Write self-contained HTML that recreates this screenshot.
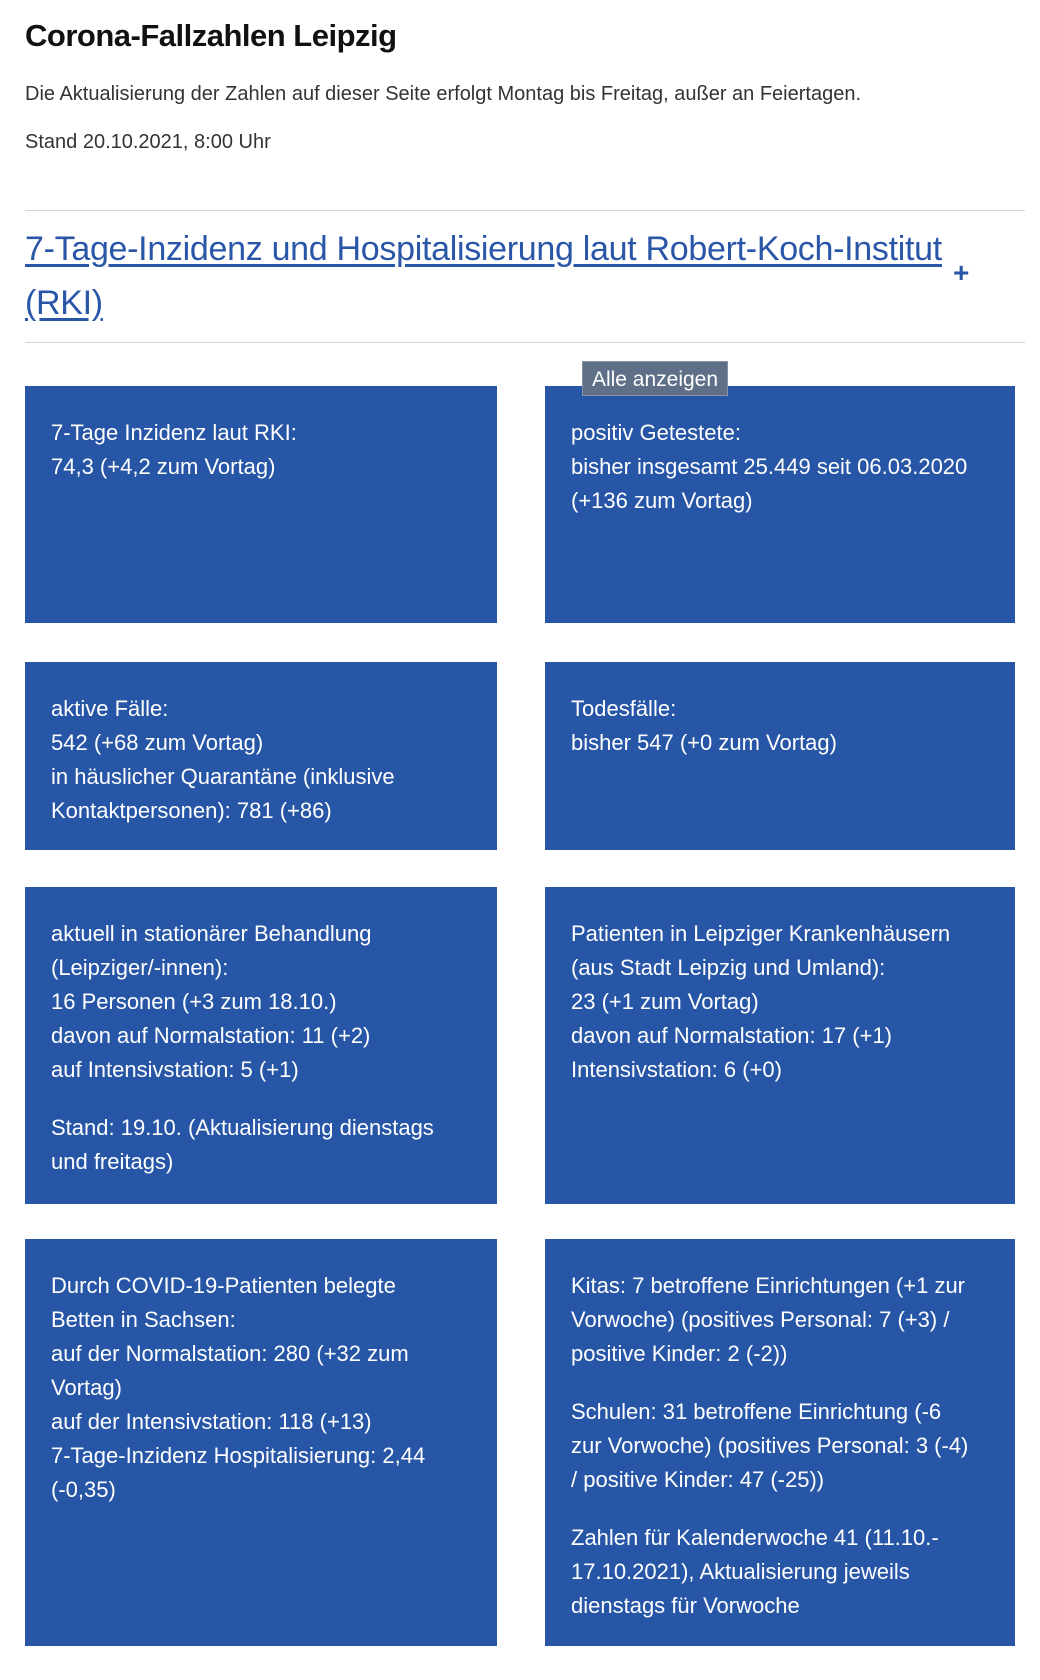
<!DOCTYPE html>
<html><head><meta charset="utf-8"><style>
body{margin:0;background:#fff;font-family:"Liberation Sans",sans-serif;color:#222;width:1040px;height:1680px;position:relative;overflow:hidden}
h1{position:absolute;left:25px;top:18px;margin:0;font-size:31px;font-weight:bold;color:#111;letter-spacing:-0.5px}
.p{position:absolute;left:25px;font-size:20px;color:#333}
.hr{position:absolute;left:25px;width:1000px;height:1px;background:#d4d4d4}
.h2{position:absolute;left:25px;top:222px;width:960px;font-size:34px;line-height:54px;color:#2a56a8;text-decoration:underline;text-underline-offset:4px;letter-spacing:-0.3px;white-space:nowrap}
.plus{position:absolute;left:953px;top:257px;font-size:28px;color:#2a56a8;font-weight:bold}
.b{position:absolute;background:#2756a7;color:#fff;font-size:22px;line-height:34px;padding:30px 10px 0 26px;box-sizing:border-box;white-space:nowrap;overflow:hidden}
.b p{margin:0 0 24px}
.l{left:25px;width:472px}.r{left:545px;width:470px}
.tip{position:absolute;left:582px;top:361px;width:146px;height:35px;background:#5f6f87;color:#fff;font-size:21px;line-height:35px;text-align:center;border:1px solid #8894a6;box-sizing:border-box;z-index:2}
</style></head><body>
<h1>Corona-Fallzahlen Leipzig</h1>
<div class="p" style="top:83px">Die Aktualisierung der Zahlen auf dieser Seite erfolgt Montag bis Freitag, außer an Feiertagen.</div>
<div class="p" style="top:131px">Stand 20.10.2021, 8:00 Uhr</div>
<div class="hr" style="top:210px"></div>
<div class="h2">7-Tage-Inzidenz und Hospitalisierung laut Robert-Koch-Institut<br>(RKI)</div>
<div class="plus">+</div>
<div class="hr" style="top:342px"></div>
<div class="tip">Alle anzeigen</div>
<div class="b l" style="top:386px;height:237px"><p>7-Tage Inzidenz laut RKI:<br>74,3 (+4,2 zum Vortag)</p></div>
<div class="b r" style="top:386px;height:237px"><p>positiv Getestete:<br>bisher insgesamt 25.449 seit 06.03.2020<br>(+136 zum Vortag)</p></div>
<div class="b l" style="top:662px;height:188px"><p>aktive Fälle:<br>542 (+68 zum Vortag)<br>in häuslicher Quarantäne (inklusive<br>Kontaktpersonen): 781 (+86)</p></div>
<div class="b r" style="top:662px;height:188px"><p>Todesfälle:<br>bisher 547 (+0 zum Vortag)</p></div>
<div class="b l" style="top:887px;height:317px"><p>aktuell in stationärer Behandlung<br>(Leipziger/-innen):<br>16 Personen (+3 zum 18.10.)<br>davon auf Normalstation: 11 (+2)<br>auf Intensivstation: 5 (+1)</p><p>Stand: 19.10. (Aktualisierung dienstags<br>und freitags)</p></div>
<div class="b r" style="top:887px;height:317px"><p>Patienten in Leipziger Krankenhäusern<br>(aus Stadt Leipzig und Umland):<br>23 (+1 zum Vortag)<br>davon auf Normalstation: 17 (+1)<br>Intensivstation: 6 (+0)</p></div>
<div class="b l" style="top:1239px;height:407px"><p>Durch COVID-19-Patienten belegte<br>Betten in Sachsen:<br>auf der Normalstation: 280 (+32 zum<br>Vortag)<br>auf der Intensivstation: 118 (+13)<br>7-Tage-Inzidenz Hospitalisierung: 2,44<br>(-0,35)</p></div>
<div class="b r" style="top:1239px;height:407px"><p>Kitas: 7 betroffene Einrichtungen (+1 zur<br>Vorwoche) (positives Personal: 7 (+3) /<br>positive Kinder: 2 (-2))</p><p>Schulen: 31 betroffene Einrichtung (-6<br>zur Vorwoche) (positives Personal: 3 (-4)<br>/ positive Kinder: 47 (-25))</p><p>Zahlen für Kalenderwoche 41 (11.10.-<br>17.10.2021), Aktualisierung jeweils<br>dienstags für Vorwoche</p></div>
</body></html>
